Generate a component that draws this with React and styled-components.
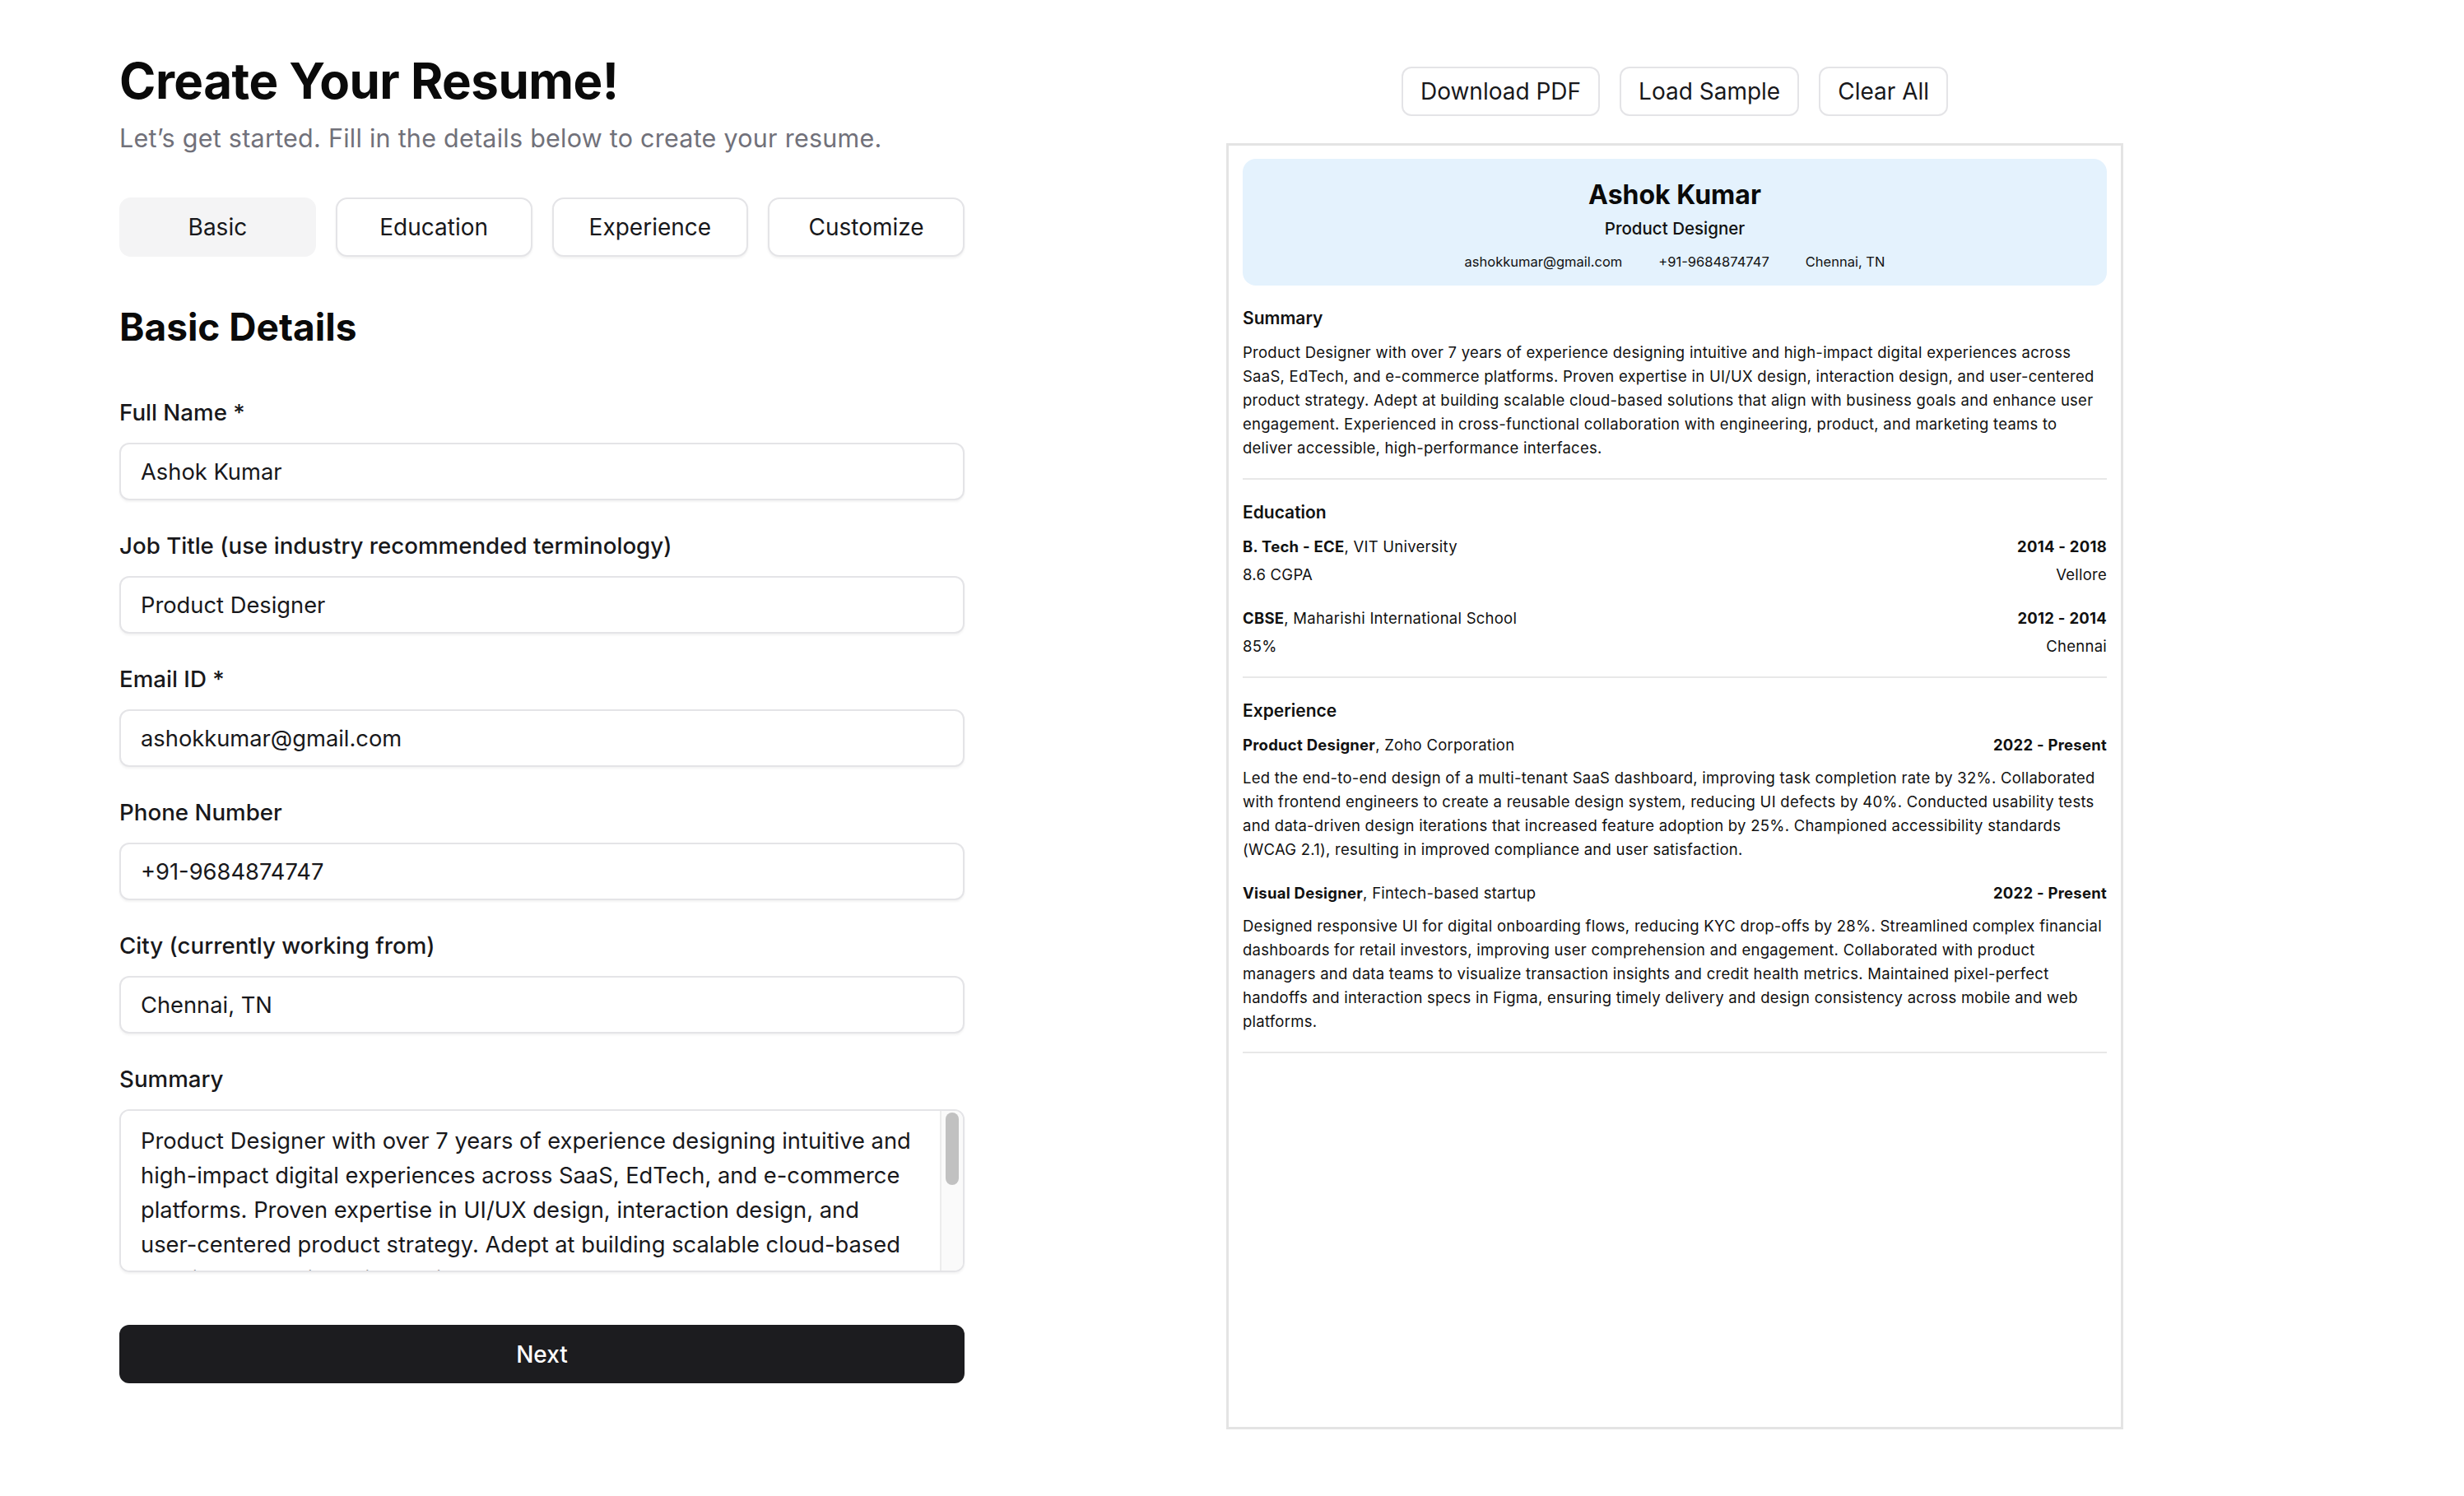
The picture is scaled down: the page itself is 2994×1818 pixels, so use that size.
import styled, { createGlobalStyle } from 'styled-components';

const GlobalStyle = createGlobalStyle`
  * { box-sizing: border-box; }
  html, body {
    margin: 0;
    padding: 0;
    background: #ffffff;
    font-family: Inter, "Noto Sans", "Liberation Sans", sans-serif;
    color: #18181b;
  }
`;

const SUMMARY =
  'Product Designer with over 7 years of experience designing intuitive and high-impact digital experiences across SaaS, EdTech, and e-commerce platforms. Proven expertise in UI/UX design, interaction design, and user-centered product strategy. Adept at building scalable cloud-based solutions that align with business goals and enhance user engagement. Experienced in cross-functional collaboration with engineering, product, and marketing teams to deliver accessible, high-performance interfaces.';

const tabs = ['Basic', 'Education', 'Experience', 'Customize'];

const fields = [
  { label: 'Full Name *', value: 'Ashok Kumar' },
  { label: 'Job Title (use industry recommended terminology)', value: 'Product Designer' },
  { label: 'Email ID *', value: 'ashokkumar@gmail.com' },
  { label: 'Phone Number', value: '+91-9684874747' },
  { label: 'City (currently working from)', value: 'Chennai, TN' },
];

const education = [
  { degree: 'B. Tech - ECE', school: 'VIT University', years: '2014 - 2018', score: '8.6 CGPA', place: 'Vellore' },
  { degree: 'CBSE', school: 'Maharishi International School', years: '2012 - 2014', score: '85%', place: 'Chennai' },
];

const experience = [
  {
    role: 'Product Designer',
    company: 'Zoho Corporation',
    years: '2022 - Present',
    text: 'Led the end-to-end design of a multi-tenant SaaS dashboard, improving task completion rate by 32%. Collaborated with frontend engineers to create a reusable design system, reducing UI defects by 40%. Conducted usability tests and data-driven design iterations that increased feature adoption by 25%. Championed accessibility standards (WCAG 2.1), resulting in improved compliance and user satisfaction.',
  },
  {
    role: 'Visual Designer',
    company: 'Fintech-based startup',
    years: '2022 - Present',
    text: 'Designed responsive UI for digital onboarding flows, reducing KYC drop-offs by 28%. Streamlined complex financial dashboards for retail investors, improving user comprehension and engagement. Collaborated with product managers and data teams to visualize transaction insights and credit health metrics. Maintained pixel-perfect handoffs and interaction specs in Figma, ensuring timely delivery and design consistency across mobile and web platforms.',
  },
];

export default function App() {
  return (
    <>
      <GlobalStyle />
      <Page>
        <FormColumn>
          <Title>Create Your Resume!</Title>
          <Subtitle>Let’s get started. Fill in the details below to create your resume.</Subtitle>
          <Tabs>
            {tabs.map((t) => (
              <Tab key={t} $active={t === 'Basic'}>{t}</Tab>
            ))}
          </Tabs>
          <SectionHeading>Basic Details</SectionHeading>
          <Fields>
            {fields.map((f) => (
              <Field key={f.label}>
                <Label>{f.label}</Label>
                <Input defaultValue={f.value} />
              </Field>
            ))}
            <Field>
              <Label>Summary</Label>
              <TextAreaBox>
                <TextArea defaultValue={SUMMARY} />
                <ScrollTrack>
                  <ScrollThumb />
                </ScrollTrack>
              </TextAreaBox>
            </Field>
          </Fields>
          <NextButton>Next</NextButton>
        </FormColumn>

        <PreviewColumn>
          <Actions>
            <ActionButton>Download PDF</ActionButton>
            <ActionButton>Load Sample</ActionButton>
            <ActionButton>Clear All</ActionButton>
          </Actions>
          <Sheet>
            <ResumeHeader>
              <Name>Ashok Kumar</Name>
              <Role>Product Designer</Role>
              <Contacts>
                <span>ashokkumar@gmail.com</span>
                <span>+91-9684874747</span>
                <span>Chennai, TN</span>
              </Contacts>
            </ResumeHeader>

            <Section>
              <SectionTitle>Summary</SectionTitle>
              <Body>{SUMMARY}</Body>
            </Section>

            <Section>
              <SectionTitle>Education</SectionTitle>
              {education.map((e) => (
                <Entry key={e.degree}>
                  <Row>
                    <span><b>{e.degree}</b>, {e.school}</span>
                    <b>{e.years}</b>
                  </Row>
                  <Row $gap={5}>
                    <span>{e.score}</span>
                    <span>{e.place}</span>
                  </Row>
                </Entry>
              ))}
            </Section>

            <Section>
              <SectionTitle>Experience</SectionTitle>
              {experience.map((x) => (
                <Entry key={x.role}>
                  <Row>
                    <span><b>{x.role}</b>, {x.company}</span>
                    <b>{x.years}</b>
                  </Row>
                  <Body $gap={11}>{x.text}</Body>
                </Entry>
              ))}
            </Section>
          </Sheet>
        </PreviewColumn>
      </Page>
    </>
  );
}

const Page = styled.div`
  display: flex;
  align-items: flex-start;
  padding: 62px 0 60px 145px;
  gap: 318px;
`;

const FormColumn = styled.div`
  width: 1027px;
  display: flex;
  flex-direction: column;
`;

const Title = styled.h1`
  margin: 0;
  font-size: 60px;
  line-height: 72px;
  font-weight: 700;
  color: #0a0a0a;
  letter-spacing: -0.5px;
`;

const Subtitle = styled.p`
  margin: 13px 0 0;
  font-size: 30.5px;
  line-height: 42px;
  letter-spacing: 0.25px;
  color: #71717a;
`;

const Tabs = styled.div`
  display: grid;
  grid-template-columns: repeat(4, 1fr);
  gap: 24px;
  margin-top: 51px;
`;

const Tab = styled.button`
  height: 72px;
  border-radius: 14px;
  font: inherit;
  font-size: 28px;
  color: #18181b;
  cursor: pointer;
  background: ${({ $active }) => ($active ? '#f4f4f5' : '#ffffff')};
  border: 2px solid ${({ $active }) => ($active ? '#f4f4f5' : '#e4e4e7')};
  box-shadow: ${({ $active }) => ($active ? 'none' : '0 2px 3px rgba(0, 0, 0, 0.06)')};
`;

const SectionHeading = styled.h2`
  margin: 58px 0 0;
  font-size: 46px;
  line-height: 55px;
  font-weight: 700;
  color: #0a0a0a;
`;

const Fields = styled.div`
  display: flex;
  flex-direction: column;
  gap: 35px;
  margin-top: 56px;
`;

const Field = styled.div`
  display: flex;
  flex-direction: column;
  gap: 17px;
`;

const Label = styled.label`
  font-size: 27.7px;
  line-height: 40px;
  font-weight: 500;
  color: #18181b;
`;

const Input = styled.input`
  height: 70px;
  padding: 0 24px;
  border: 2px solid #e4e4e7;
  border-radius: 12px;
  box-shadow: 0 2px 3px rgba(0, 0, 0, 0.05);
  font: inherit;
  font-size: 27.3px;
  color: #18181b;
  outline: none;
`;

const TextAreaBox = styled.div`
  height: 198px;
  display: flex;
  border: 2px solid #e4e4e7;
  border-radius: 12px;
  box-shadow: 0 2px 3px rgba(0, 0, 0, 0.05);
  overflow: hidden;
`;

const TextArea = styled.textarea`
  flex: 1;
  min-width: 0;
  padding: 16px 24px;
  border: none;
  font: inherit;
  font-size: 27.3px;
  line-height: 42px;
  color: #18181b;
  resize: none;
  outline: none;
  overflow: hidden;
`;

const ScrollTrack = styled.div`
  width: 28px;
  flex-shrink: 0;
  padding: 2px 5px 0;
  background: #fafafa;
  border-left: 2px solid #ececec;
`;

const ScrollThumb = styled.div`
  height: 88px;
  border-radius: 999px;
  background: #c1c1c1;
`;

const NextButton = styled.button`
  margin-top: 64px;
  height: 71px;
  border: none;
  border-radius: 12px;
  background: #1c1c1f;
  color: #ffffff;
  font: inherit;
  font-size: 28px;
  font-weight: 500;
  cursor: pointer;
`;

const PreviewColumn = styled.div`
  width: 1090px;
  display: flex;
  flex-direction: column;
  align-items: center;
`;

const Actions = styled.div`
  display: flex;
  gap: 24px;
  margin-top: 19px;
`;

const ActionButton = styled.button`
  height: 60px;
  padding: 0 21px;
  border: 2px solid #e4e4e7;
  border-radius: 12px;
  background: #ffffff;
  font: inherit;
  font-size: 28px;
  color: #18181b;
  cursor: pointer;
`;

const Sheet = styled.div`
  align-self: stretch;
  margin-top: 33px;
  height: 1563px;
  border: 3px solid #e4e4e4;
  padding: 16px 17px;
  color: #111111;
`;

const ResumeHeader = styled.div`
  background: #e4f2fd;
  border-radius: 16px;
  padding: 25px 20px 17px;
  display: flex;
  flex-direction: column;
  align-items: center;
`;

const Name = styled.div`
  font-size: 32px;
  line-height: 37px;
  font-weight: 700;
  color: #0a0a0a;
`;

const Role = styled.div`
  margin-top: 8px;
  font-size: 20.5px;
  line-height: 29px;
  font-weight: 500;
`;

const Contacts = styled.div`
  margin-top: 14px;
  display: flex;
  gap: 44px;
  font-size: 16.5px;
  line-height: 24px;
`;

const Section = styled.section`
  padding: 25px 0 22px;
  border-bottom: 2px solid #e8e8e8;
`;

const SectionTitle = styled.h3`
  margin: 0 0 13px;
  font-size: 21px;
  line-height: 29px;
  font-weight: 600;
`;

const Body = styled.p`
  margin: ${({ $gap }) => $gap || 0}px 0 0;
  font-size: 18.5px;
  line-height: 29px;
  letter-spacing: 0.25px;
`;

const Entry = styled.div`
  & + & {
    margin-top: 24px;
  }
`;

const Row = styled.div`
  display: flex;
  justify-content: space-between;
  margin-top: ${({ $gap }) => $gap || 0}px;
  font-size: 18.5px;
  line-height: 29px;
  letter-spacing: 0.25px;

  b {
    font-weight: 700;
  }
`;
